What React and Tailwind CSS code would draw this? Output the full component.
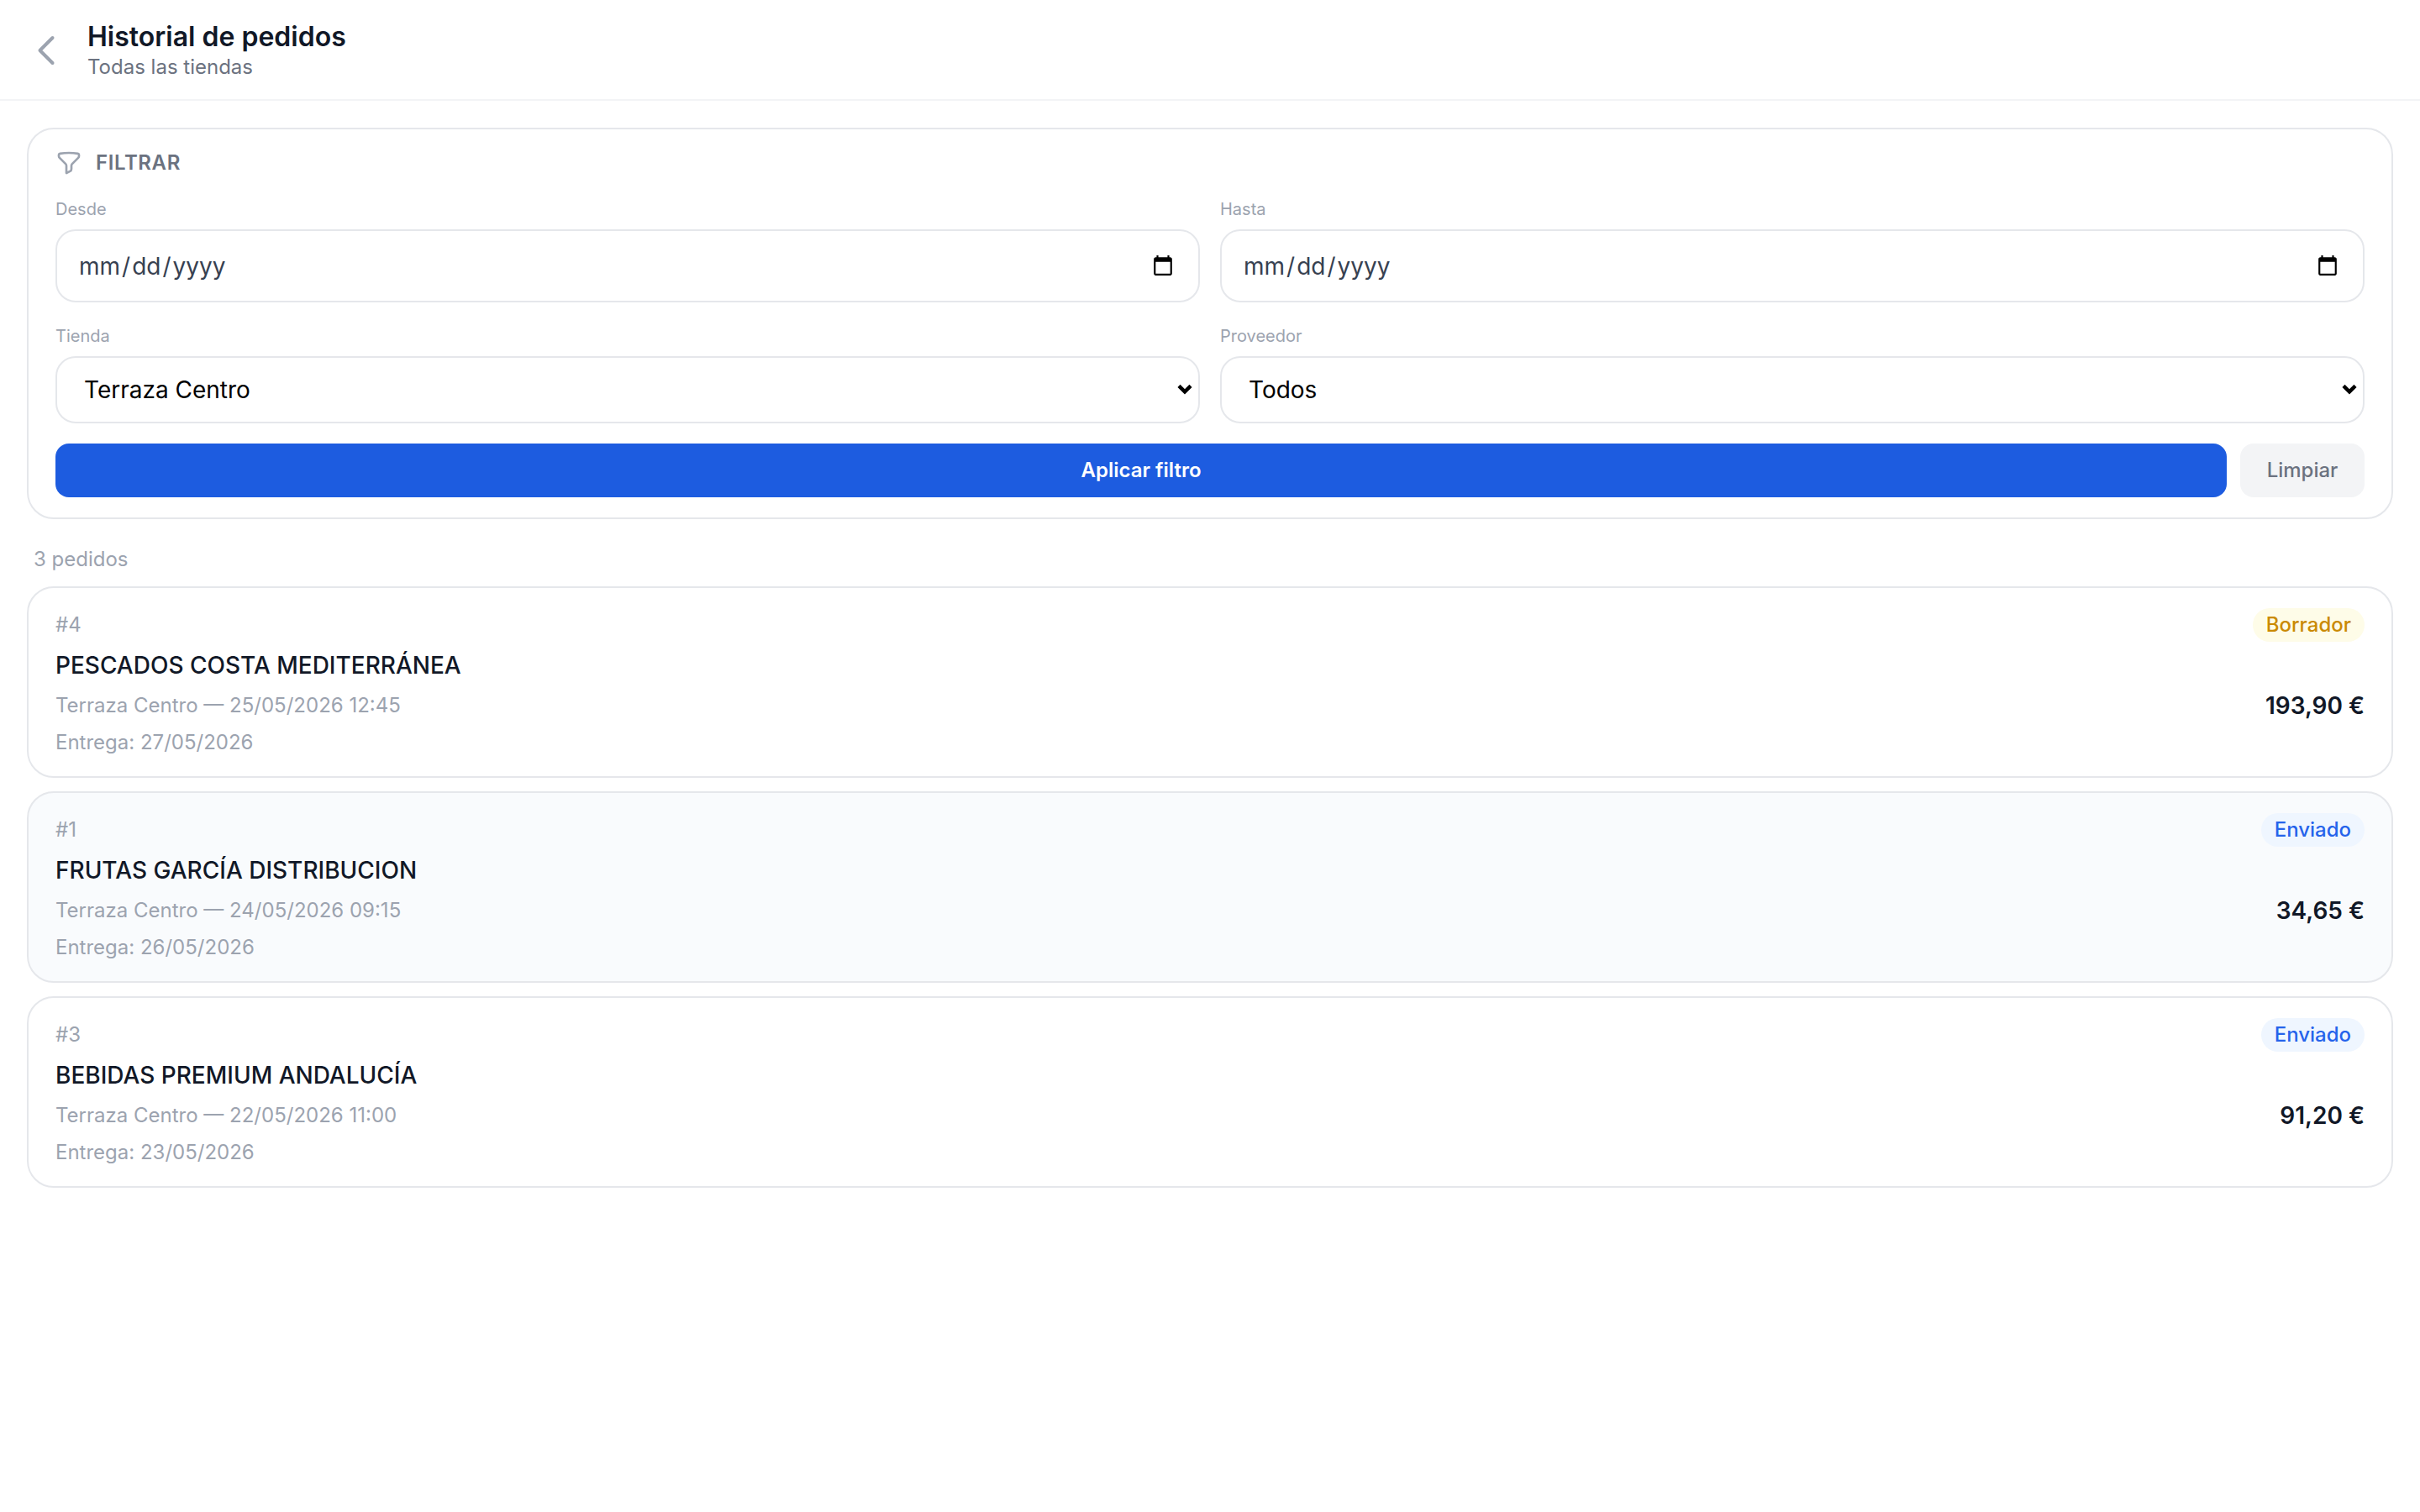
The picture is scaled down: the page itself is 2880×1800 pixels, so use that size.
const orders = [
  {id: 4, supplier: 'PESCADOS COSTA MEDITERRÁNEA', date: '25/05/2026 12:45', delivery: '27/05/2026', total: '193,90 €', status: 'Borrador'},
  {id: 1, supplier: 'FRUTAS GARCÍA DISTRIBUCION', date: '24/05/2026 09:15', delivery: '26/05/2026', total: '34,65 €', status: 'Enviado', shaded: true},
  {id: 3, supplier: 'BEBIDAS PREMIUM ANDALUCÍA', date: '22/05/2026 11:00', delivery: '23/05/2026', total: '91,20 €', status: 'Enviado'},
];

function Field({label, children}) {
  return (
    <label className="block min-w-0">
      <span className="block text-[10px] leading-4 text-[#9ca3af] mb-1">{label}</span>
      {children}
    </label>
  );
}

function Select({value}) {
  return (
    <div className="relative">
      <select defaultValue={value} className="block h-10 w-full appearance-none rounded-xl border border-[#e5e7eb] bg-white pl-4 pr-6 text-sm text-black">
        <option>{value}</option>
      </select>
      <svg width="9" height="7" viewBox="0 0 9 7" fill="none" stroke="#000" strokeWidth="2.2" className="pointer-events-none absolute right-[4.5px] top-1/2 -translate-y-1/2">
        <path d="M1 1.2 4.5 4.7 8 1.2" />
      </svg>
    </div>
  );
}

function OrderCard({order}) {
  const badge = order.status === 'Borrador' ? 'bg-[#fefce8] text-[#ca8a04]' : 'bg-[#eff6ff] text-[#2563eb]';
  return (
    <div className={`flex justify-between rounded-2xl border border-[#e5e7eb] px-4 py-3 ${order.shaded ? 'bg-[#f9fbfd]' : 'bg-white'}`}>
      <div className="min-w-0">
        <div className="text-xs leading-5 text-[#9ca3af]">#{order.id}</div>
        <div className="text-sm leading-5 font-medium text-[#111827] mt-1">{order.supplier}</div>
        <div className="text-xs leading-4 text-[#9ca3af] mt-1.5">Terraza Centro — {order.date}</div>
        <div className="text-xs leading-4 text-[#9ca3af] mt-1.5">Entrega: {order.delivery}</div>
      </div>
      <div className="flex flex-col items-end">
        <span className={`rounded-full px-2 py-0.5 text-xs leading-4 font-medium ${badge}`}>{order.status}</span>
        <span className="text-sm leading-5 font-semibold text-[#111827] mt-7">{order.total}</span>
      </div>
    </div>
  );
}

export default function App() {
  return (
    <div className="[zoom:2] min-h-[900px] bg-white font-[Inter,sans-serif] text-[#111827]">
      <header className="flex h-[60px] items-center gap-[12.5px] border-b border-[#f3f4f6] pl-[15.5px] pt-px">
        <button className="text-[#9ca3af]">
          <svg width="24" height="24" viewBox="0 0 24 24" fill="none" stroke="currentColor" strokeWidth="2" strokeLinecap="round" strokeLinejoin="round">
            <path d="M15.75 19.5 8.25 12l7.5-7.5" />
          </svg>
        </button>
        <div>
          <h1 className="text-base leading-5 font-semibold text-[#111827]">Historial de pedidos</h1>
          <p className="text-xs leading-4 text-[#6b7280]">Todas las tiendas</p>
        </div>
      </header>

      <main className="p-4">
        <section className="rounded-2xl border border-[#e5e7eb] bg-white px-4 py-3">
          <div className="mb-[11.5px] flex items-center gap-2">
            <svg width="16" height="16" viewBox="0 0 24 24" fill="none" stroke="#9ca3af" strokeWidth="2" strokeLinecap="round" strokeLinejoin="round">
              <path d="M12 3c2.755 0 5.455.232 8.083.678.533.09.917.556.917 1.096v1.044a2.25 2.25 0 0 1-.659 1.591l-5.432 5.432a2.25 2.25 0 0 0-.659 1.591v2.927a2.25 2.25 0 0 1-1.244 2.013L9.75 21v-6.568a2.25 2.25 0 0 0-.659-1.591L3.659 7.409A2.25 2.25 0 0 1 3 5.818V4.774c0-.54.384-1.006.917-1.096A48.32 48.32 0 0 1 12 3Z" />
            </svg>
            <span className="text-xs leading-4 font-semibold tracking-wide text-[#6b7280]">FILTRAR</span>
          </div>
          <div className="grid grid-cols-2 gap-3">
            <Field label="Desde">
              <input type="date" className="block h-[43.5px] w-full rounded-xl border border-[#e5e7eb] bg-white px-3 text-sm text-[#374151]" />
            </Field>
            <Field label="Hasta">
              <input type="date" className="block h-[43.5px] w-full rounded-xl border border-[#e5e7eb] bg-white px-3 text-sm text-[#374151]" />
            </Field>
            <Field label="Tienda">
              <Select value="Terraza Centro" />
            </Field>
            <Field label="Proveedor">
              <Select value="Todos" />
            </Field>
          </div>
          <div className="mt-3 flex gap-2">
            <button className="h-8 flex-1 rounded-lg bg-[#1d5ce0] text-xs font-semibold text-white">Aplicar filtro</button>
            <button className="h-8 w-[74px] rounded-lg bg-[#f3f4f6] text-xs font-medium text-[#6b7280]">Limpiar</button>
          </div>
        </section>

        <p className="mt-4 px-1 text-xs leading-4 text-[#9ca3af]">3 pedidos</p>

        <div className="mt-2 flex flex-col gap-2">
          {orders.map((order) => (
            <OrderCard key={order.id} order={order} />
          ))}
        </div>
      </main>
    </div>
  );
}
